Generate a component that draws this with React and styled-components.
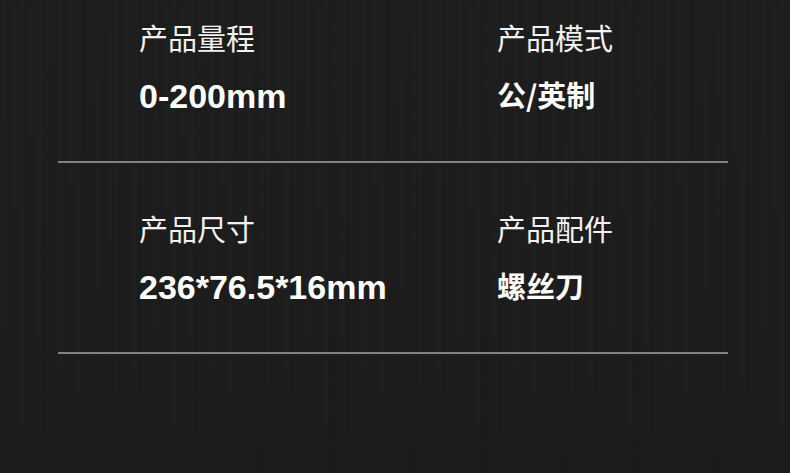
import React from 'react';
import styled, { createGlobalStyle } from 'styled-components';


const GlobalStyle = createGlobalStyle`
    html, body {
        margin: 0;
        padding: 0;
        background: #1c1c1c;
    }
    * {
        box-sizing: border-box;
    }
`;

const Page = styled.div`
    width: 790px;
    height: 473px;
    overflow: hidden;
    padding: 0 62px 0 58px;
    background-color: #1c1c1c;
    background-image:
        repeating-linear-gradient(90deg,
            rgba(255, 255, 255, 0.006) 0px,
            rgba(255, 255, 255, 0.006) 5px,
            rgba(0, 0, 0, 0.015) 5px,
            rgba(0, 0, 0, 0.015) 11px,
            rgba(255, 255, 255, 0.004) 11px,
            rgba(255, 255, 255, 0.004) 19px),
        linear-gradient(180deg, #1d1d1d 0%, #1b1b1b 100%);
    font-family: "Liberation Sans", "Noto Sans CJK SC", sans-serif;
    color: #f4f4f4;
`;

const Row = styled.div`
    display: grid;
    grid-template-columns: 358px 1fr;
    padding: 45px 0 45px 81px;
    border-bottom: 2px solid #828282;

    &:first-child {
        padding-top: 17px;
    }
`;

const Item = styled.div`
    display: flex;
    flex-direction: column;
    gap: 19px;
`;

const Label = styled.div`
    font-family: "Noto Sans CJK SC", sans-serif;
    font-size: 29px;
    line-height: 40px;
    font-weight: 400;
    color: #f2f2f2;
`;

const Value = styled.div`
    font-family: ${props => props.cjk
        ? `"Noto Sans CJK SC", sans-serif`
        : `"Liberation Sans", "Noto Sans CJK SC", sans-serif`};
    font-size: ${props => props.cjk ? '29px' : '34px'};
    line-height: ${props => props.cjk ? '36px' : '40px'};
    padding-bottom: ${props => props.cjk ? '4px' : '0'};
    font-weight: 700;
    color: #ffffff;
`;

const specs = [
    [
        { label: '产品量程', value: '0-200mm' },
        { label: '产品模式', value: '公/英制', cjk: true }
    ],
    [
        { label: '产品尺寸', value: '236*76.5*16mm' },
        { label: '产品配件', value: '螺丝刀', cjk: true }
    ]
];

const App = () => {

    return (
        <Page>
            <GlobalStyle />
            {specs.map((row, i) => (
                <Row key={`row-${i}`}>
                    {row.map(item => (
                        <Item key={item.label}>
                            <Label>{item.label}</Label>
                            <Value cjk={item.cjk}>{item.value}</Value>
                        </Item>
                    ))}
                </Row>
            ))}
        </Page>
    );
};

export default App;
